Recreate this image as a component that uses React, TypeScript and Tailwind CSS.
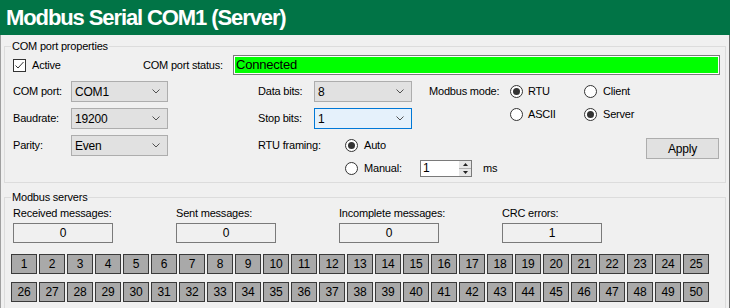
import React from 'react';

function Chevron() {
  return (
    <svg width="8" height="5" viewBox="0 0 8 5">
      <path d="M0.5 0.5 L4 4 L7.5 0.5" fill="none" stroke="#505050" strokeWidth="1" />
    </svg>
  );
}

function Combo({ value, className, focused }: { value: string; className: string; focused?: boolean }) {
  return (
    <div
      className={`flex h-[21px] items-center justify-between border pl-[3px] pr-[7px] text-[12px] ${className} ${
        focused ? 'border-[#0078d7] bg-[#e5f1fb]' : 'border-[#adadad] bg-[#e1e1e1]'
      }`}
    >
      <span>{value}</span>
      <Chevron />
    </div>
  );
}

function Radio({ checked }: { checked?: boolean }) {
  return (
    <span className="flex h-[13px] w-[13px] shrink-0 items-center justify-center rounded-full border border-[#333333] bg-white">
      {checked && <span className="h-[7px] w-[7px] rounded-full bg-[#333333]" />}
    </span>
  );
}

function Stat({ label, value }: { label: string; value: string }) {
  return (
    <div className="flex w-[163px] flex-col">
      <span className="leading-[12px]">{label}</span>
      <div className="mt-[4px] flex h-[20px] w-[100px] items-center justify-center border border-[#7a7a7a] text-[12px]">
        {value}
      </div>
    </div>
  );
}

export default function App() {
  const servers = Array.from({ length: 50 }, (_, i) => i + 1);

  return (
    <div className="h-[308px] w-[730px] overflow-hidden bg-[#f0f0f0] font-['Liberation_Sans',Arial,sans-serif] text-[11px] tracking-[-0.2px] text-black">
      {/* Title bar */}
      <div className="flex h-[35px] items-center bg-[#017446] pb-[1px] pl-[6px]">
        <h1 className="text-[22px] font-bold tracking-[-1.1px] text-white">Modbus Serial COM1 (Server)</h1>
      </div>

      <div className="flex h-[273px] flex-col border-l border-r border-l-[#a0a0a0] border-r-[#6d6d6d] pt-[5px]">
        {/* COM port properties */}
        <fieldset className="ml-[3px] w-[722px] border border-[#dcdcdc] pb-[5px]">
          <legend className="ml-[6px] px-[1px] leading-[12px]">COM port properties</legend>

          <div className="mt-[3px] flex h-[20px] items-center pl-[8px]">
            <span className="flex h-[13px] w-[13px] items-center justify-center border border-[#333333] bg-white">
              <svg width="11" height="11" viewBox="0 0 11 11">
                <path d="M1.5 5.5 L4 8 L9.5 2" fill="none" stroke="#333333" strokeWidth="1" />
              </svg>
            </span>
            <span className="ml-[6px] w-[111px]">Active</span>
            <span className="w-[90px]">COM port status:</span>
            <div className="h-[20px] w-[487px] border border-[#7a7a7a] bg-white p-[1px]">
              <div className="h-full bg-[#00ff00] pl-[1px] text-[13px] leading-[16px]">Connected</div>
            </div>
          </div>

          <div className="mt-[6px] flex pl-[8px]">
            {/* serial settings */}
            <div className="flex w-[155px] shrink-0 flex-col gap-[6px]">
              {[
                ['COM port:', 'COM1'],
                ['Baudrate:', '19200'],
                ['Parity:', 'Even'],
              ].map(([label, value]) => (
                <div key={label} className="flex items-center">
                  <span className="w-[58px]">{label}</span>
                  <Combo value={value} className="w-[97px]" />
                </div>
              ))}
            </div>

            {/* data / stop bits, framing */}
            <div className="ml-[90px] flex w-[154px] shrink-0 flex-col">
              <div className="flex items-center">
                <span className="w-[56px]">Data bits:</span>
                <Combo value="8" className="w-[98px]" />
              </div>
              <div className="mt-[6px] flex items-center">
                <span className="w-[56px]">Stop bits:</span>
                <Combo value="1" className="w-[98px]" focused />
              </div>
              <div className="mt-[6px] flex h-[21px] w-max items-center">
                <span className="w-[87px]">RTU framing:</span>
                <Radio checked />
                <span className="ml-[6px]">Auto</span>
              </div>
              <div className="mt-[4px] flex h-[17px] w-max items-center pl-[87px]">
                <Radio />
                <span className="ml-[6px] w-[56px]">Manual:</span>
                <div className="flex h-[17px] w-[52px] border border-[#7a7a7a] bg-white">
                  <span className="flex-1 pl-[2px] text-[12px] leading-[15px]">1</span>
                  <div className="flex w-[12px] flex-col bg-[#e6e6e6]">
                    <div className="flex flex-1 items-center justify-center border-b border-[#b0b0b0]">
                      <svg width="5" height="3" viewBox="0 0 5 3">
                        <path d="M0 3 L2.5 0 L5 3 Z" fill="#222222" />
                      </svg>
                    </div>
                    <div className="flex flex-1 items-center justify-center">
                      <svg width="5" height="3" viewBox="0 0 5 3">
                        <path d="M0 0 L2.5 3 L5 0 Z" fill="#222222" />
                      </svg>
                    </div>
                  </div>
                </div>
                <span className="ml-[11px]">ms</span>
              </div>
            </div>

            {/* modbus mode */}
            <div className="ml-[17px] flex w-[290px] shrink-0 flex-col">
              <div className="flex h-[21px] items-center">
                <span className="w-[81px]">Modbus mode:</span>
                <div className="flex w-[74px] items-center">
                  <Radio checked />
                  <span className="ml-[5px]">RTU</span>
                </div>
                <Radio />
                <span className="ml-[6px]">Client</span>
              </div>
              <div className="mt-[2px] flex h-[21px] items-center pl-[81px]">
                <div className="flex w-[74px] items-center">
                  <Radio />
                  <span className="ml-[5px]">ASCII</span>
                </div>
                <Radio checked />
                <span className="ml-[6px]">Server</span>
              </div>
              <button className="mt-[13px] flex h-[21px] w-[73px] items-center justify-center self-end border border-[#adadad] bg-[#e1e1e1] text-[12px]">
                Apply
              </button>
            </div>
          </div>
        </fieldset>

        {/* Modbus servers */}
        <fieldset className="ml-[3px] mt-[8px] w-[722px] border border-[#dcdcdc] pb-[10px]">
          <legend className="ml-[6px] px-[1px] leading-[12px]">Modbus servers</legend>

          <div className="mt-[4px] flex pl-[8px]">
            <Stat label="Received messages:" value="0" />
            <Stat label="Sent messages:" value="0" />
            <Stat label="Incomplete messages:" value="0" />
            <Stat label="CRC errors:" value="1" />
          </div>

          <div className="mt-[11px] grid grid-cols-[repeat(25,26px)] gap-x-[2px] gap-y-[8px] pl-[6px]">
            {servers.map((n) => (
              <div
                key={n}
                className="flex h-[20px] items-center justify-center border border-[#3a3a3a] bg-[#a9a9a9] text-[12px]"
              >
                {n}
              </div>
            ))}
          </div>
        </fieldset>
      </div>
    </div>
  );
}
